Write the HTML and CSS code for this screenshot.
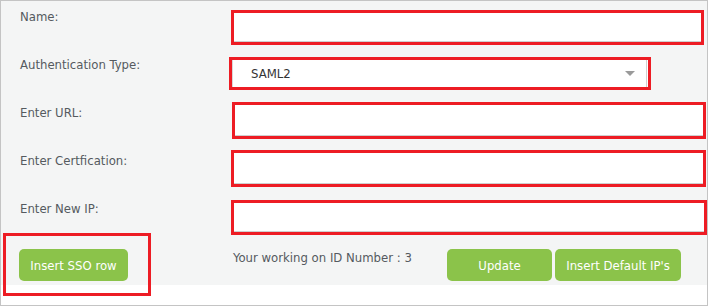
FILE: index.html
```html
<!DOCTYPE html>
<html>
<head>
<meta charset="utf-8">
<link rel="stylesheet" href="styles.css">
</head>
<body>
<div class="frame">
  <div class="panel">
    <div class="row">
      <label class="lbl">Name:</label>
      <div class="mark mark-name"><div class="field"></div></div>
    </div>
    <div class="row">
      <label class="lbl">Authentication Type:</label>
      <div class="mark mark-auth">
        <div class="select">
          <span class="select-val">SAML2</span>
          <svg class="caret" width="10" height="5" viewBox="0 0 10 5"><polygon points="0,0 10,0 5,5" fill="#9a9a9a"/></svg>
        </div>
      </div>
    </div>
    <div class="row">
      <label class="lbl">Enter URL:</label>
      <div class="mark mark-url"><div class="field"></div></div>
    </div>
    <div class="row">
      <label class="lbl">Enter Certfication:</label>
      <div class="mark mark-cert"><div class="field"></div></div>
    </div>
    <div class="row">
      <label class="lbl">Enter New IP:</label>
      <div class="mark mark-ip"><div class="field"></div></div>
    </div>
    <div class="actions">
      <div class="mark mark-sso"><button class="btn btn-sso">Insert SSO row</button></div>
      <span class="status">Your working on ID Number : 3</span>
      <button class="btn btn-update">Update</button>
      <button class="btn btn-default">Insert Default IP's</button>
    </div>
  </div>
</div>
</body>
</html>
```
FILE: styles.css
```css
* { box-sizing: border-box; }
html, body { margin: 0; padding: 0; background: #ffffff; }
body {
  font-family: "DejaVu Sans Condensed", "DejaVu Sans", sans-serif;
  font-size: 13px;
  color: #555555;
}
.frame {
  width: 708px;
  height: 306px;
  border: 1px solid #c4c4c4;
  background: #ffffff;
}
.panel {
  height: 284px;
  background: #f4f5f5;
  display: flex;
  flex-direction: column;
}
.row {
  height: 48px;
  display: flex;
  align-items: flex-start;
  flex: 0 0 48px;
}
.lbl {
  flex: 0 0 230px;
  padding-left: 19px;
  padding-top: 8px;
  line-height: 16px;
  color: #555a5f;
}
.mark {
  border: 3px solid #ed1c24;
  background: #ffffff;
}
.field {
  height: 100%;
  border-bottom: 1px solid #cfcfcf;
}
.mark-name { margin-top: 9px; width: 473px; height: 35px; }
.mark-auth { margin-top: 8px; margin-left: -2px; width: 422px; height: 33px; }
.mark-url { margin-top: 5px; margin-left: 1px; width: 474px; height: 37px; }
.mark-cert { margin-top: 5px; width: 475px; height: 37px; }
.mark-ip { margin-top: 7px; width: 476px; height: 35px; }
.select {
  height: 100%;
  margin-right: 1px;
  border-left: 1px solid #d8d8d8;
  border-right: 1px solid #cfcfcf;
  display: flex;
  align-items: center;
  justify-content: space-between;
  padding-left: 18px;
  padding-right: 11px;
}
.select-val { color: #333333; font-size: 13px; }
.caret { display: block; }
.actions {
  display: flex;
  align-items: flex-start;
}
.mark-sso {
  margin-top: -8px;
  margin-left: 2px;
  width: 148px;
  height: 63px;
  padding: 13px 0 0 13px;
  background: transparent;
}
.btn {
  height: 32px;
  border: none;
  border-radius: 5px;
  background: #8bc34a;
  color: #ffffff;
  font-family: "DejaVu Sans Condensed", "DejaVu Sans", sans-serif;
  font-size: 13px;
  padding: 0;
  margin-top: 8px;
}
.btn-sso { width: 109px; margin-top: 0; }
.status {
  margin-left: 82px;
  width: 214px;
  padding-top: 9px;
  line-height: 16px;
  color: #555a5f;
}
.btn-update { width: 105px; }
.btn-default { width: 126px; margin-left: 3px; }
```
